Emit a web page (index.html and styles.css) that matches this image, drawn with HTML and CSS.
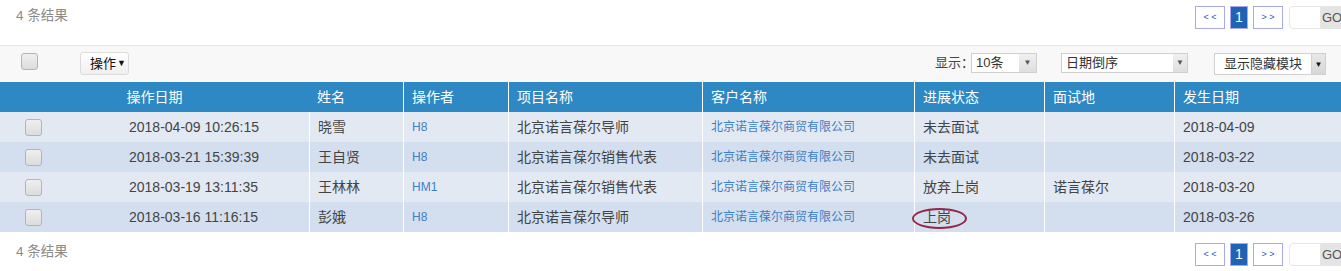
FILE: index.html
```html
<!DOCTYPE html>
<html lang="zh-CN">
<head>
<meta charset="utf-8">
<title>结果列表</title>
<link rel="stylesheet" href="styles.css">
</head>
<body>
<div class="page">
  <div class="summary top">
    <span class="count">4 条结果</span>
    <div class="pager">
      <button class="pg">&lt; &lt;</button>
      <button class="pg active">1</button>
      <button class="pg">&gt; &gt;</button>
      <span class="goto"><span class="go-input"></span><span class="go-btn">GO</span></span>
    </div>
  </div>

  <div class="toolbar">
    <div class="tb-left">
      <span class="cb"></span>
      <button class="op-btn">操作<span class="caret">▼</span></button>
    </div>
    <div class="tb-right">
      <span class="lbl">显示：</span>
      <span class="sel sel-size"><span class="sel-text">10条</span><span class="sel-arrow">▼</span></span>
      <span class="sel sel-sort"><span class="sel-text">日期倒序</span><span class="sel-arrow">▼</span></span>
      <span class="mod-group"><span class="mod-btn">显示隐藏模块</span><span class="mod-toggle">▼</span></span>
    </div>
  </div>

  <div class="thead">
    <div class="th th-first">操作日期</div>
    <div class="th nb">姓名</div>
    <div class="th">操作者</div>
    <div class="th">项目名称</div>
    <div class="th">客户名称</div>
    <div class="th">进展状态</div>
    <div class="th">面试地</div>
    <div class="th">发生日期</div>
  </div>

  <div class="tbody">
    <div class="tr odd">
      <div class="td td-cb"><span class="cb"></span></div>
      <div class="td nb">2018-04-09 10:26:15</div>
      <div class="td">晓雪</div>
      <div class="td link">H8</div>
      <div class="td">北京诺言葆尔导师</div>
      <div class="td link">北京诺言葆尔商贸有限公司</div>
      <div class="td">未去面试</div>
      <div class="td"></div>
      <div class="td">2018-04-09</div>
    </div>
    <div class="tr even">
      <div class="td td-cb"><span class="cb"></span></div>
      <div class="td nb">2018-03-21 15:39:39</div>
      <div class="td">王自贤</div>
      <div class="td link">H8</div>
      <div class="td">北京诺言葆尔销售代表</div>
      <div class="td link">北京诺言葆尔商贸有限公司</div>
      <div class="td">未去面试</div>
      <div class="td"></div>
      <div class="td">2018-03-22</div>
    </div>
    <div class="tr odd">
      <div class="td td-cb"><span class="cb"></span></div>
      <div class="td nb">2018-03-19 13:11:35</div>
      <div class="td">王林林</div>
      <div class="td link">HM1</div>
      <div class="td">北京诺言葆尔销售代表</div>
      <div class="td link">北京诺言葆尔商贸有限公司</div>
      <div class="td">放弃上岗</div>
      <div class="td">诺言葆尔</div>
      <div class="td">2018-03-20</div>
    </div>
    <div class="tr even">
      <div class="td td-cb"><span class="cb"></span></div>
      <div class="td nb">2018-03-16 11:16:15</div>
      <div class="td">彭娥</div>
      <div class="td link">H8</div>
      <div class="td">北京诺言葆尔导师</div>
      <div class="td link">北京诺言葆尔商贸有限公司</div>
      <div class="td marked">上岗<span class="oval"></span></div>
      <div class="td"></div>
      <div class="td">2018-03-26</div>
    </div>
  </div>

  <div class="summary bottom">
    <span class="count">4 条结果</span>
    <div class="pager">
      <button class="pg">&lt; &lt;</button>
      <button class="pg active">1</button>
      <button class="pg">&gt; &gt;</button>
      <span class="goto"><span class="go-input"></span><span class="go-btn">GO</span></span>
    </div>
  </div>
</div>
</body>
</html>
```

FILE: styles.css
```css
* { box-sizing: border-box; }
html, body {
  margin: 0;
  padding: 0;
  background: #ffffff;
  overflow: hidden;
}
body {
  font-family: "Liberation Sans", "Noto Sans CJK SC", sans-serif;
  font-size: 14px;
  color: #444;
}
.page { width: 1341px; }

/* summary bars */
.summary {
  display: flex;
  justify-content: space-between;
  align-items: flex-start;
  padding-left: 16px;
}
.summary.top { height: 45px; }
.summary.top .count { margin-top: 8px; }
.summary.top .pager { margin-top: 6px; }
.summary.bottom { height: 39px; }
.summary.bottom .count { margin-top: 12px; }
.summary.bottom .pager { margin-top: 11px; }
.count {
  font-size: 13.5px;
  color: #8a8a8a;
  line-height: 16px;
}
.pager {
  display: flex;
  align-items: center;
}
.pg {
  height: 23px;
  width: 30px;
  margin: 0 5px 0 0;
  padding: 0;
  border: 1px solid #a9a9ee;
  background: #fff;
  color: #2a55d0;
  font-family: "Liberation Sans", sans-serif;
  font-size: 9px;
  line-height: 21px;
  cursor: pointer;
}
.pg.active {
  width: 18px;
  background: #2062b4;
  color: #fff;
  font-size: 14px;
  margin-right: 5px;
}
.goto {
  display: flex;
  margin-left: 1px;
  height: 23px;
}
.go-input {
  width: 32px;
  height: 23px;
  border: 1px solid #e6e6e6;
  border-radius: 4px 0 0 4px;
  background: #fff;
}
.go-btn {
  width: 20px;
  height: 23px;
  background: #e4e4e4;
  color: #555;
  font-size: 13px;
  line-height: 23px;
  padding-left: 1px;
  overflow: hidden;
  white-space: nowrap;
}

/* toolbar */
.toolbar {
  height: 37px;
  border-top: 1px solid #e6e6e6;
  background: #f8f8f8;
  display: flex;
  justify-content: space-between;
  align-items: flex-start;
  padding: 0 15px 0 21px;
}
.tb-left {
  display: flex;
  align-items: flex-start;
  padding-top: 7px;
}
.cb {
  display: inline-block;
  width: 17px;
  height: 17px;
  border: 1px solid #b4b4b4;
  border-radius: 3px;
  background: linear-gradient(#efefef, #dcdcdc);
}
.op-btn {
  margin-left: 42px;
  margin-top: -1px;
  height: 23px;
  width: 49px;
  padding: 0 0 0 9px;
  border: 1px solid #dcdcdc;
  border-radius: 3px;
  background: linear-gradient(#ffffff, #efefef);
  color: #111;
  font-family: "Liberation Sans", "Noto Sans CJK SC", sans-serif;
  font-size: 13px;
  line-height: 21px;
  display: flex;
  align-items: center;
}
.caret {
  font-size: 9px;
  margin-left: 1px;
  color: #111;
}
.tb-right {
  display: flex;
  align-items: flex-start;
  padding-top: 7px;
}
.lbl {
  font-size: 13px;
  color: #444;
  line-height: 19px;
  margin-right: -3px;
}
.sel {
  display: flex;
  height: 20px;
  border: 1px solid #d0d0d0;
  background: #fff;
}
.sel-text {
  flex: 1;
  font-size: 13px;
  color: #333;
  line-height: 18px;
  padding-left: 4px;
}
.sel-arrow {
  width: 17px;
  background: linear-gradient(#f0f0f0, #dedede);
  color: #555;
  font-size: 8px;
  line-height: 18px;
  text-align: center;
}
.sel-size { width: 66px; }
.sel-sort { width: 127px; margin-left: 24px; }
.sel-sort .sel-arrow { width: 14px; }
.mod-group {
  display: flex;
  margin-left: 26px;
  height: 22px;
}
.mod-btn {
  width: 98px;
  height: 22px;
  border: 1px solid #d0d0d0;
  background: #fff;
  font-size: 13px;
  color: #333;
  line-height: 20px;
  text-align: center;
}
.mod-toggle {
  width: 14px;
  height: 22px;
  border: 1px solid #d0d0d0;
  border-left: none;
  background: linear-gradient(#e8e8e8, #d6d6d6);
  color: #111;
  font-size: 8px;
  line-height: 22px;
  text-align: center;
}

/* table */
.thead, .tr {
  display: grid;
  grid-template-columns: 121px 188px 94px 105px 194px 212px 130px 130px 1fr;
}
.thead {
  grid-template-columns: 309px 94px 105px 194px 212px 130px 130px 1fr;
  background: #2e88c3;
  height: 30px;
}
.th {
  color: #fff;
  font-size: 14px;
  line-height: 30px;
  padding-left: 8px;
  border-left: 1px solid #ffffff;
  white-space: nowrap;
}
.th-first {
  border-left: none;
  text-align: center;
  padding-left: 0;
}
.th.nb, .td.nb { border-left: none; }
.tr { height: 30px; }
.tr.odd { background: #e3e9f2; }
.tr.even { background: #d3dfee; }
.td {
  border-left: 1px solid #ffffff;
  padding-left: 8px;
  line-height: 30px;
  font-size: 14px;
  color: #444;
  white-space: nowrap;
}
.td-cb {
  border-left: none;
  padding-left: 25px;
  display: flex;
  align-items: center;
}
.td.link {
  color: #3b80c6;
  font-size: 12px;
}
.td.marked { position: relative; }
.oval {
  position: absolute;
  left: -3px;
  top: 6px;
  width: 55px;
  height: 21px;
  border: 2px solid #922748;
  border-radius: 50%;
}
```
